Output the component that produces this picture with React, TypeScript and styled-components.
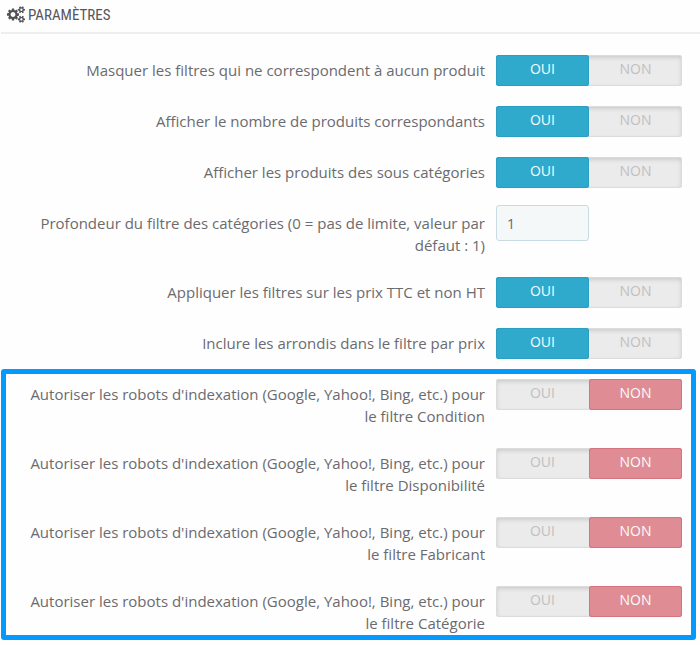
import React, { useId, useState } from "react";
import styled, { createGlobalStyle, css } from "styled-components";

const GlobalStyle = createGlobalStyle`
  *, *::before, *::after { box-sizing: border-box; }
  body {
    margin: 0;
    background: #fefefe;
    color: #6b6b6f;
    font: 15px/22px "Open Sans", "Noto Sans", sans-serif;
  }
`;

const Panel = styled.form`
  padding-bottom: 6px;
`;

const Heading = styled.h3`
  display: flex;
  align-items: center;
  gap: 3px;
  height: 34px;
  margin: 0 0 18px 1px;
  padding: 0 0 3px 6px;
  border-bottom: 2px solid #eeeeee;
  color: #55565c;
  font: 400 15px/22px "Ubuntu Condensed", "Roboto Condensed", "Open Sans Condensed", "Liberation Sans Narrow", sans-serif;
  text-transform: uppercase;
`;

const CogsSvg = styled.svg`
  width: 18px;
  height: 17px;
  fill: #505157;
`;

const Rows = styled.div`
  display: grid;
  gap: 17px;
  padding: 0 18px 0 20px;
`;

const HighlightedRows = styled(Rows)`
  margin: 10px 4px 0 1px;
  padding: 2px 9px 0 15px;
  border: 5px solid #0399fe;
  border-radius: 3px;
`;

const rowLayout = css`
  display: grid;
  grid-template-columns: minmax(0, 1fr) 186px;
  column-gap: 11px;
  align-items: start;
`;

const FieldRow = styled.div`
  ${rowLayout}
`;

const SwitchRow = styled.div`
  ${rowLayout}
`;

const labelStyle = css`
  padding: 7px 0 1px;
  text-align: right;
`;

const FieldLabel = styled.label`
  ${labelStyle}
`;

const SwitchLabel = styled.span`
  ${labelStyle}
`;

const Track = styled.div`
  display: grid;
  grid-template-columns: 1fr 1fr;
  height: 31px;
  margin-top: 3px;
  border-radius: 3px;
  background: #ebebeb;
  box-shadow: inset 0 0 0 1px #dcdcdc, inset 0 2px 5px rgba(0, 0, 0, 0.17);
`;

const Radio = styled.input`
  position: absolute;
  inset: 0;
  width: 100%;
  height: 100%;
  margin: 0;
  opacity: 0;
  cursor: pointer;
`;

const tones = {
  yes: { fill: "#2faacd", edge: "#2a9fc1" },
  no: { fill: "#df8c94", edge: "#d4747e" },
};

const Option = styled.label<{ $tone: "yes" | "no"; $active: boolean }>`
  position: relative;
  padding: 3px 0 6px;
  border-radius: 3px;
  color: #c0c0c0;
  font-size: 14px;
  text-align: center;
  ${(p) =>
    p.$active &&
    css`
      background: ${tones[p.$tone].fill};
      box-shadow: inset 0 0 0 1px ${tones[p.$tone].edge};
      color: #f8fcfd;
    `}
`;

const NumberField = styled.input`
  width: 93px;
  height: 36px;
  padding: 0 10px;
  border: 1px solid #c9dbe2;
  border-radius: 3px;
  background: #f5f8f9;
  color: #66686c;
  font: inherit;
  font-size: 14px;
`;

function CogsIcon() {
  return (
    <CogsSvg viewBox="0 0 1920 1792" aria-hidden="true">
      <path d="M896 896q0-106-75-181t-181-75-181 75-75 181 75 181 181 75 181-75 75-181zm768 512q0-52-38-90t-90-38-90 38-38 90q0 53 37.5 90.5t90.5 37.5 90.5-37.5 37.5-90.5zm0-1024q0-52-38-90t-90-38-90 38-38 90q0 53 37.5 90.5t90.5 37.5 90.5-37.5 37.5-90.5zm-384 421v185q0 10-7 19.5t-16 10.5l-155 24q-11 35-32 76 34 48 90 115 7 11 7 20 0 12-7 19-23 30-82.5 89.5t-78.5 59.5q-11 0-21-7l-115-90q-37 19-77 31-11 108-23 155-7 24-30 24h-186q-11 0-20-7.5t-10-17.5l-23-153q-34-10-75-31l-118 89q-7 7-20 7-11 0-21-8-144-133-144-160 0-9 7-19 10-14 41-53t47-61q-23-44-35-82l-152-24q-10-1-17-9.5t-7-19.5v-185q0-10 7-19.5t16-10.5l155-24q11-35 32-76-34-48-90-115-7-11-7-20 0-12 7-20 22-30 82-89t79-59q11 0 21 7l115 90q34-18 77-32 11-108 23-154 7-24 30-24h186q11 0 20 7.5t10 17.5l23 153q34 10 75 31l118-89q8-7 20-7 11 0 21 8 144 133 144 160 0 8-7 19-12 16-42 54t-45 60q23 48 34 82l152 23q10 2 17 10.5t7 19.5zm640 533v140q0 16-149 31-12 27-30 52 51 113 51 138 0 4-4 7-122 71-124 71-8 0-46-47t-52-68q-20 2-30 2t-30-2q-14 21-52 68t-46 47q-2 0-124-71-4-3-4-7 0-25 51-138-18-25-30-52-149-15-149-31v-140q0-16 149-31 13-29 30-52-51-113-51-138 0-4 4-7 4-2 35-20t59-34 30-16q8 0 46 46.5t52 67.5q20-2 30-2t30 2q51-71 92-112l6-2q4 0 124 70 4 3 4 7 0 25-51 138 17 23 30 52 149 15 149 31zm0-1024v140q0 16-149 31-12 27-30 52 51 113 51 138 0 4-4 7-122 71-124 71-8 0-46-47t-52-68q-20 2-30 2t-30-2q-14 21-52 68t-46 47q-2 0-124-71-4-3-4-7 0-25 51-138-18-25-30-52-149-15-149-31v-140q0-16 149-31 13-29 30-52-51-113-51-138 0-4 4-7 4-2 35-20t59-34 30-16q8 0 46 46.5t52 67.5q20-2 30-2t30 2q51-71 92-112l6-2q4 0 124 70 4 3 4 7 0 25-51 138 17 23 30 52 149 15 149 31z" />
    </CogsSvg>
  );
}

function SwitchField({ label, initial = false }: { label: string; initial?: boolean }) {
  const id = useId();
  const [on, setOn] = useState(initial);
  return (
    <SwitchRow role="radiogroup" aria-labelledby={id}>
      <SwitchLabel id={id}>{label}</SwitchLabel>
      <Track>
        <Option $tone="yes" $active={on}>
          <Radio type="radio" name={id + "-choice"} checked={on} onChange={() => setOn(true)} />
          OUI
        </Option>
        <Option $tone="no" $active={!on}>
          <Radio type="radio" name={id + "-choice"} checked={!on} onChange={() => setOn(false)} />
          NON
        </Option>
      </Track>
    </SwitchRow>
  );
}

const robotFilters = ["Condition", "Disponibilité", "Fabricant", "Catégorie"];

export default function App() {
  return (
    <>
      <GlobalStyle />
      <Panel>
        <Heading>
          <CogsIcon />
          Paramètres
        </Heading>
        <Rows>
          <SwitchField label="Masquer les filtres qui ne correspondent à aucun produit" initial />
          <SwitchField label="Afficher le nombre de produits correspondants" initial />
          <SwitchField label="Afficher les produits des sous catégories" initial />
          <FieldRow>
            <FieldLabel htmlFor="depth">
              Profondeur du filtre des catégories (0 = pas de limite, valeur par défaut : 1)
            </FieldLabel>
            <NumberField id="depth" type="text" inputMode="numeric" defaultValue="1" />
          </FieldRow>
          <SwitchField label="Appliquer les filtres sur les prix TTC et non HT" initial />
          <SwitchField label="Inclure les arrondis dans le filtre par prix" initial />
        </Rows>
        <HighlightedRows>
          {robotFilters.map((name) => (
            <SwitchField
              key={name}
              label={`Autoriser les robots d'indexation (Google, Yahoo!, Bing, etc.) pour le filtre ${name}`}
            />
          ))}
        </HighlightedRows>
      </Panel>
    </>
  );
}
